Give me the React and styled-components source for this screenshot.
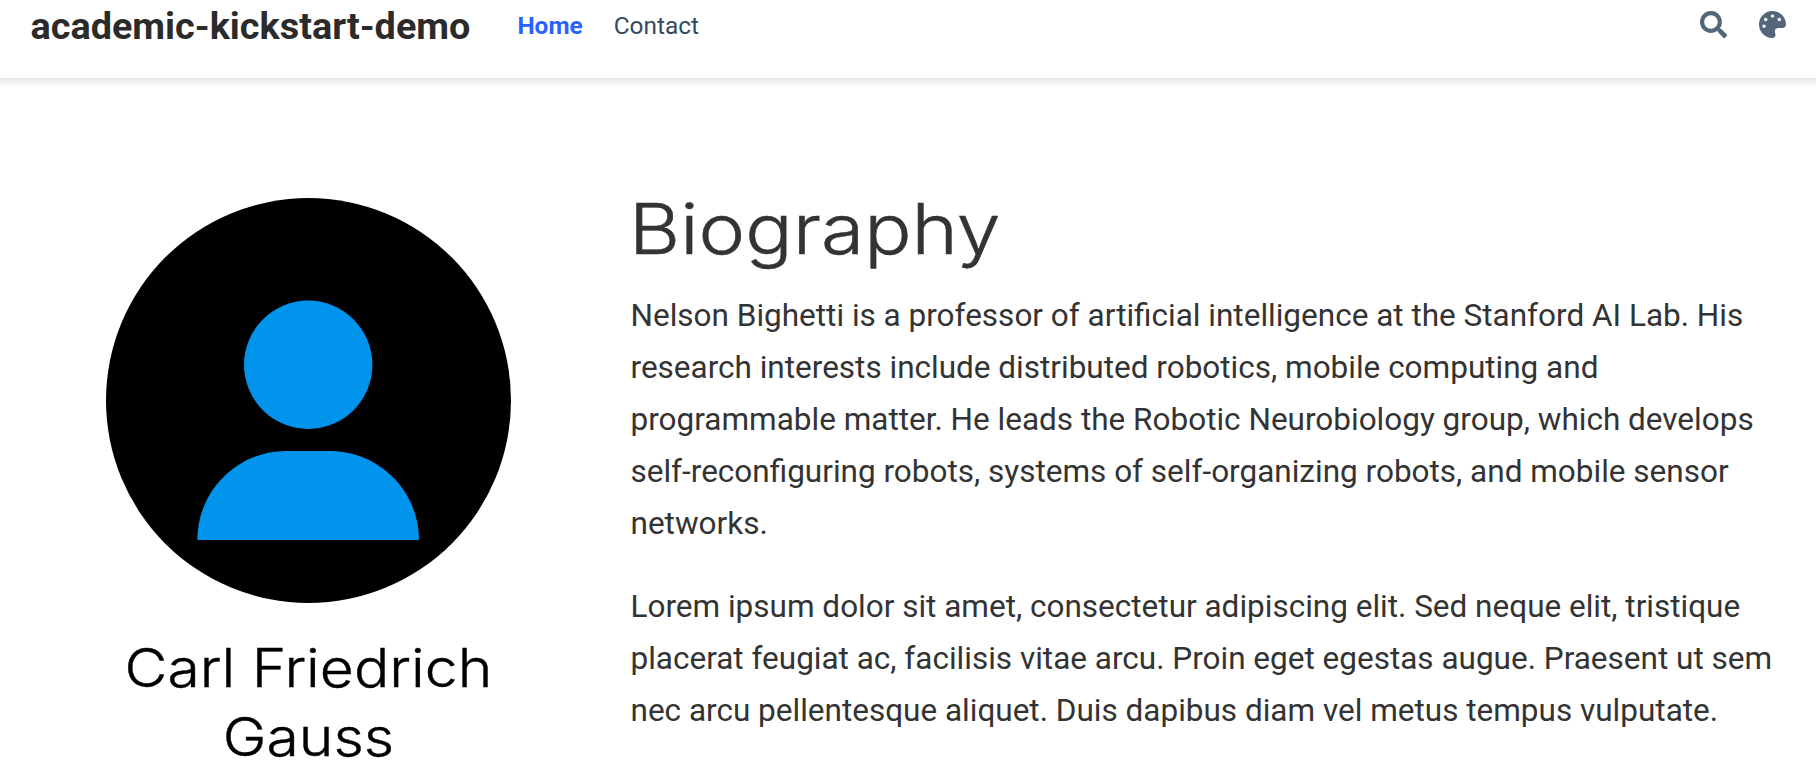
import React from 'react';
import styled, { createGlobalStyle } from 'styled-components';
import { FaSearch, FaPalette } from 'react-icons/fa';

const GlobalStyle = createGlobalStyle`
  *, *::before, *::after { box-sizing: border-box; }
  body {
    margin: 0;
    background: #fff;
    color: #333;
    font-family: Roboto, "Liberation Sans", sans-serif;
    font-size: 31.5px;
    line-height: 1.65;
    overflow: hidden;
  }
`;

const Page = styled.div`
  height: 775px;
  overflow: hidden;
`;

/* The bar bleeds past both edges so its shadow stays even across the page */
const Navbar = styled.header`
  display: flex;
  align-items: center;
  height: 78px;
  margin: 0 -20px;
  padding: 0 50px 26px 50.5px;
  background: #fff;
  box-shadow: 0 3.9px 7.9px rgba(0, 0, 0, 0.11);
`;

const Brand = styled.a`
  color: #2b2b2b;
  font-size: 37.8px;
  font-weight: 700;
  line-height: 50px;
`;

const NavLinks = styled.nav`
  display: flex;
  gap: 31px;
  margin-left: 47px;
`;

const NavLink = styled.a`
  color: ${({ $active }) => ($active ? '#2962ff' : '#34495e')};
  font-size: 24.4px;
  font-weight: ${({ $active }) => ($active ? 700 : 400)};
  line-height: 40px;
`;

const NavIcons = styled.div`
  display: flex;
  gap: 31.5px;
  margin: 0 0.5px 3px auto;
  color: #54677a;
  font-size: 27px;

  svg { display: block; }
`;

const Main = styled.main`
  display: grid;
  grid-template-columns: 405px 1155px;
  column-gap: 119.5px;
  padding: 105.5px 0 0 106px;
`;

const Profile = styled.aside`
  padding-top: 14.5px;
  text-align: center;
`;

const Avatar = styled.svg`
  display: block;
  width: 405px;
  height: 405px;
`;

/* Inter Light, widened to geometric display proportions */
const Name = styled.h2`
  margin: 30.5px 0 0;
  color: #000;
  font-family: Inter, sans-serif;
  font-size: 53px;
  font-weight: 300;
  line-height: 69.5px;
  transform: scaleX(1.11);
  -webkit-text-stroke: 0.4px currentColor;
`;

const Biography = styled.section`
  min-width: 0;
`;

const Heading = styled.h1`
  margin: 0 0 16.5px -1.5px;
  font-family: Inter, sans-serif;
  font-size: 69.5px;
  font-weight: 300;
  line-height: 90px;
  transform: scaleX(1.133);
  transform-origin: left center;
  -webkit-text-stroke: 0.5px currentColor;
`;

const Paragraph = styled.p`
  margin: 0 0 31.5px;
`;

export default function App() {
  return (
    <Page>
      <GlobalStyle />
      <Navbar>
        <Brand>academic-kickstart-demo</Brand>
        <NavLinks>
          <NavLink $active>Home</NavLink>
          <NavLink>Contact</NavLink>
        </NavLinks>
        <NavIcons>
          <FaSearch />
          <FaPalette />
        </NavIcons>
      </Navbar>
      <Main>
        <Profile>
          <Avatar viewBox="0 0 405 405" role="img" aria-label="Carl Friedrich Gauss">
            <circle cx="202.5" cy="202.5" r="202.5" fill="#000" />
            <circle cx="202.2" cy="166.8" r="64.2" fill="#0094ec" />
            <path d="M91.3 342C91.3 293 131 253 180 253H224C273 253 313 293 313 342Z" fill="#0094ec" />
          </Avatar>
          <Name>Carl Friedrich<br />Gauss</Name>
        </Profile>
        <Biography>
          <Heading>Biography</Heading>
          <Paragraph>
            Nelson Bighetti is a professor of artificial intelligence at the Stanford AI Lab. His
            research interests include distributed robotics, mobile computing and
            programmable matter. He leads the Robotic Neurobiology group, which develops
            self-reconfiguring robots, systems of self-organizing robots, and mobile sensor
            networks.
          </Paragraph>
          <Paragraph>
            Lorem ipsum dolor sit amet, consectetur adipiscing elit. Sed neque elit, tristique
            placerat feugiat ac, facilisis vitae arcu. Proin eget egestas augue. Praesent ut sem
            nec arcu pellentesque aliquet. Duis dapibus diam vel metus tempus vulputate.
          </Paragraph>
        </Biography>
      </Main>
    </Page>
  );
}
